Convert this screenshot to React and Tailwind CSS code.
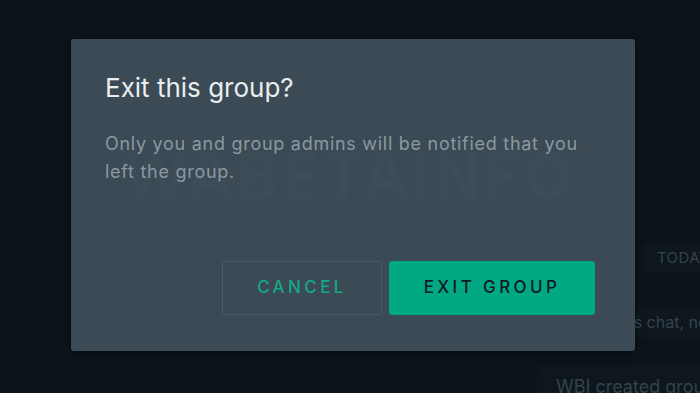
import React from "react";

export default function App() {
  return (
    <div
      className="relative w-[700px] h-[393px] overflow-hidden bg-[#0b141a]"
      style={{ fontFamily: "Inter, 'Noto Sans', sans-serif" }}
    >
      {/* background chat content */}
      <div className="flex flex-col items-start pl-[537px] pt-[244px] whitespace-nowrap text-[#35434b]">
        <div className="ml-[104px] h-[28px] px-[16px] rounded-[6px] bg-[#0d171d] flex items-center text-[15px] tracking-wide">
          TODAY
        </div>
        <div className="ml-[55px] mt-[34px] h-[32px] pl-[18px] pr-[14px] rounded-[6px] bg-[#0d171d] flex items-center text-[16px]">
          This chat, no
        </div>
        <div className="mt-[28px] h-[40px] pl-[19px] pr-[14px] rounded-[6px] bg-[#0d171d] flex items-center text-[18px]">
          WBI created group
        </div>
      </div>

      {/* dialog overlay */}
      <div className="absolute left-[71px] top-[39px] w-[564px] h-[312px] rounded-[3px] bg-[#3b4a54] shadow-[0_2px_8px_rgba(0,0,0,0.4)] px-[34px] pt-[33px]">
        <div className="absolute left-[52px] top-[106px] text-[62px] leading-[62px] font-bold tracking-[0.06em] text-[#3d4c56] select-none whitespace-nowrap">
          WABETAINFO
        </div>
        <div className="relative flex flex-col">
          <h1 className="text-[26px] leading-[31px] font-normal text-[#e9edef]">
            Exit this group?
          </h1>
          <p className="mt-[27px] text-[18px] leading-[28px] tracking-[0.04em] text-[#8a99a2] w-[484px]">
            Only you and group admins will be notified that you left the group.
          </p>
          <div className="mt-[75px] flex justify-end gap-[7px] pr-[6px]">
            <button className="w-[160px] h-[54px] rounded-[3px] border border-[#4b5a63] text-[#14a887] text-[17px] font-medium tracking-[0.2em]">
              CANCEL
            </button>
            <button className="w-[206px] h-[54px] rounded-[3px] bg-[#00a884] text-[#111b21] text-[17px] font-medium tracking-[0.2em]">
              EXIT GROUP
            </button>
          </div>
        </div>
      </div>
    </div>
  );
}
